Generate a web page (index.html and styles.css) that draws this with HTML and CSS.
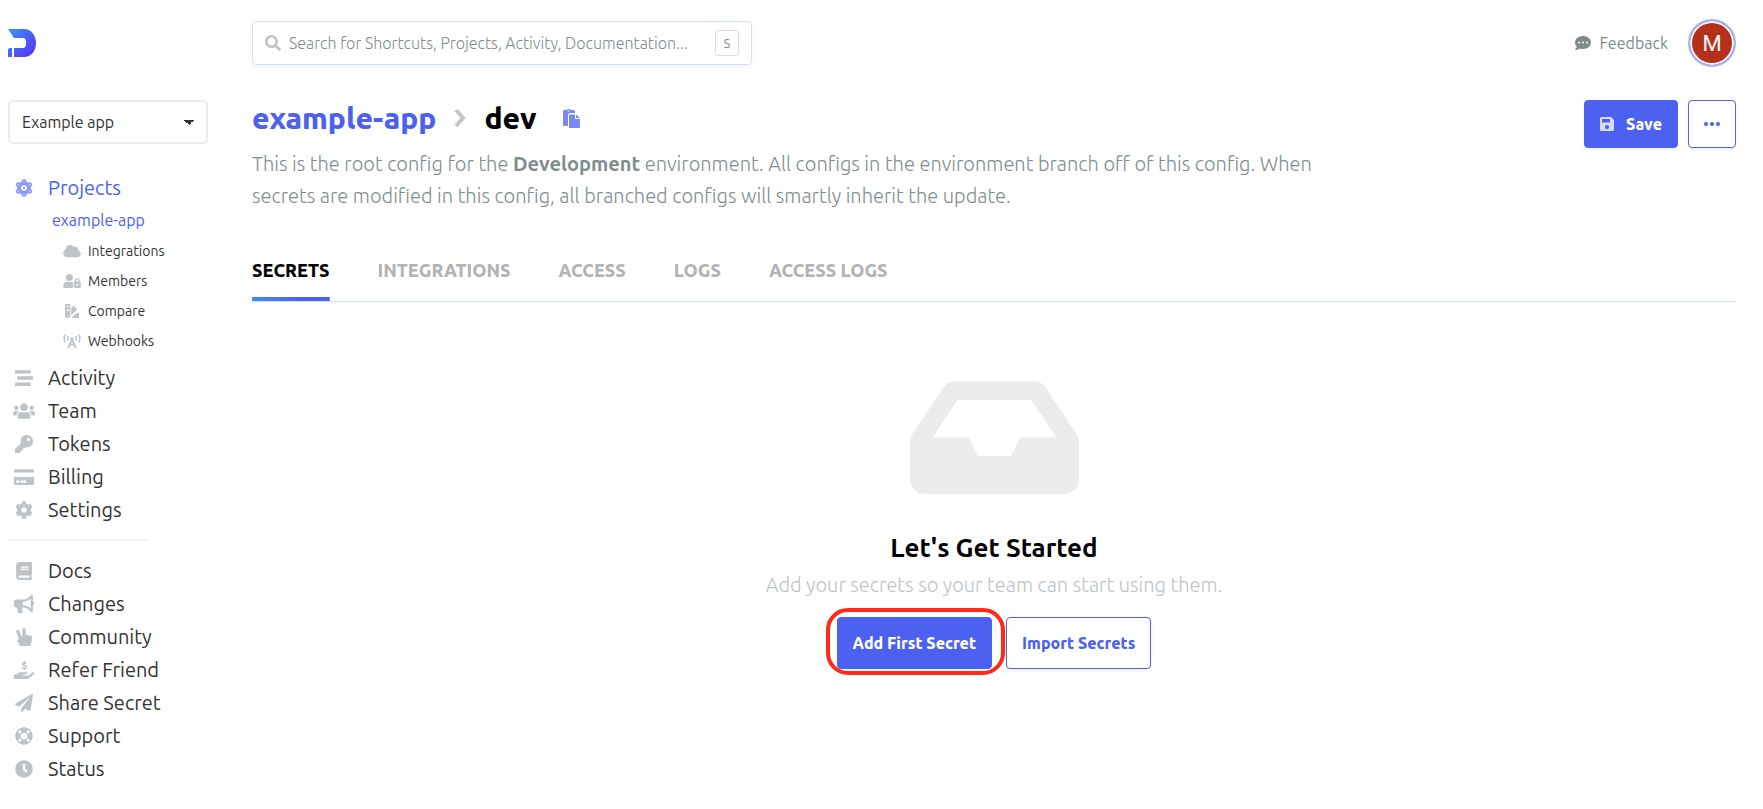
FILE: index.html
```
<!DOCTYPE html>
<html lang="en">
<head>
<meta charset="utf-8">
<title>example-app / dev</title>
<link rel="stylesheet" href="styles.css">
</head>
<body>
<div class="app">
  <aside class="sidebar">
    <a class="logo" href="#" aria-label="Home">
      <svg width="28" height="28" viewBox="0 0 28 28"><defs><linearGradient id="brand" x1="0" y1="0" x2="1" y2="1"><stop offset="0" stop-color="#3f96f0"/><stop offset=".45" stop-color="#4668f3"/><stop offset="1" stop-color="#5a2dff"/></linearGradient></defs><path fill="url(#brand)" d="M0 0H16C23 0 28 6 28 14S23 28 16 28H6V19H15C17 19 18 17.500 18 14S17 9 15 9H6zM0 21Q0 19 2 19H4V28H0z"/></svg>
    </a>
    <select class="project-select" aria-label="Project"><option>Example app</option></select>
    <nav class="nav">
      <a class="nav-item nav-item-active" href="#"><svg class="nav-icon" viewBox="0 0 18 18"><path fill-rule="evenodd" d="M9 1L16 5V13L9 17 2 13V5zM9 6.200a2.800 2.800 0 1 0 0 5.600 2.800 2.800 0 0 0 0-5.600z"/><g fill="#fff" stroke="currentColor" stroke-width="1.800"><circle cx="9" cy="2.400" r="1.500"/><circle cx="9" cy="15.600" r="1.500"/><circle cx="3.200" cy="5.700" r="1.500"/><circle cx="14.800" cy="5.700" r="1.500"/><circle cx="3.200" cy="12.300" r="1.500"/><circle cx="14.800" cy="12.300" r="1.500"/></g><circle cx="9" cy="9" r="1.200"/></svg>Projects</a>
      <a class="nav-project" href="#">example-app</a>
      <div class="subnav">
        <a class="subnav-item" href="#"><svg class="subnav-icon" viewBox="0 0 640 512"><path d="M537.6 226.6c4.100-10.700 6.400-22.400 6.400-34.600 0-53-43-96-96-96-19.700 0-38.100 6-53.300 16.200C367 64.200 315.300 32 256 32c-88.400 0-160 71.600-160 160 0 2.700.1 5.400.2 8.100C40.200 219.800 0 273.200 0 336c0 79.500 64.500 144 144 144h368c70.700 0 128-57.300 128-128 0-61.900-44-113.600-102.400-125.400z"/></svg>Integrations</a>
        <a class="subnav-item" href="#"><svg class="subnav-icon" viewBox="0 0 640 512"><path fill-rule="evenodd" d="M224 0a128 128 0 1 1 0 256A128 128 0 0 1 224 0zM134 288h180q22 0 42 8-4 12-4 24v160q0 18 10 32H48q-48 0-48-48v-42q0-134 134-134zM424 272v-40a88 88 0 0 1 176 0v40q40 0 40 40v160q0 40-40 40H424q-40 0-40-40V312q0-40 40-40zm48 0h80v-40a40 40 0 0 0-80 0zm40 80a40 40 0 1 0 0 80 40 40 0 0 0 0-80z"/></svg>Members</a>
        <a class="subnav-item" href="#"><svg class="subnav-icon" viewBox="0 0 512 512"><path fill-rule="evenodd" d="M0 32Q0 0 32 0h128q32 0 32 32v384a96 96 0 0 1-192 0zM64 64v64h64V64zm0 128v64h64v-64zm32 200a24 24 0 1 0 0 48 24 24 0 0 0 0-48zM224 150l67-67q22-22 44 0l92 92q22 22 0 44L224 422zM434 320h46q32 0 32 32v128q0 32-32 32H242z"/></svg>Compare</a>
        <a class="subnav-item" href="#"><svg class="subnav-icon" viewBox="0 0 640 512"><g fill="none" stroke="currentColor" stroke-width="56" stroke-linecap="round"><path d="M70 36q-72 124 0 248M570 36q72 124 0 248M176 100q-32 60 0 120M464 100q32 60 0 120"/><path stroke-width="64" d="M320 190L196 480M320 190l124 290M250 376h140"/></g><circle cx="320" cy="170" r="64"/></svg>Webhooks</a>
      </div>
      <a class="nav-item" href="#"><svg class="nav-icon" viewBox="0 0 512 512"><path d="M16 128h416c8.840 0 16-7.160 16-16V48c0-8.840-7.160-16-16-16H16C7.160 32 0 39.160 0 48v64c0 8.840 7.160 16 16 16zm480 80H80c-8.840 0-16 7.160-16 16v64c0 8.840 7.160 16 16 16h416c8.840 0 16-7.160 16-16v-64c0-8.840-7.160-16-16-16zm-64 176H16c-8.840 0-16 7.160-16 16v64c0 8.840 7.160 16 16 16h416c8.840 0 16-7.160 16-16v-64c0-8.840-7.160-16-16-16z"/></svg>Activity</a>
      <a class="nav-item" href="#"><svg class="nav-icon" viewBox="0 0 640 512"><path d="M96 224c35.300 0 64-28.700 64-64s-28.700-64-64-64-64 28.700-64 64 28.700 64 64 64zm448 0c35.300 0 64-28.700 64-64s-28.700-64-64-64-64 28.700-64 64 28.700 64 64 64zm32 32h-64c-17.600 0-33.500 7.100-45.100 18.600 40.300 22.100 68.900 62 75.100 109.400h66c17.700 0 32-14.300 32-32v-32c0-35.300-28.700-64-64-64zm-256 0c61.900 0 112-50.100 112-112S381.900 32 320 32 208 82.100 208 144s50.100 112 112 112zm76.800 32h-8.300c-20.800 10-43.900 16-68.500 16s-47.600-6-68.500-16h-8.300C179.600 288 128 339.600 128 403.200V432c0 26.500 21.500 48 48 48h288c26.500 0 48-21.500 48-48v-28.800c0-63.600-51.600-115.200-115.200-115.200zm-223.700-13.400C161.500 263.100 145.600 256 128 256H64c-35.300 0-64 28.700-64 64v32c0 17.700 14.300 32 32 32h65.900c6.300-47.400 34.900-87.300 75.200-109.400z"/></svg>Team</a>
      <a class="nav-item" href="#"><svg class="nav-icon" viewBox="0 0 512 512"><path d="M512 176.001C512 273.203 433.202 352 336 352c-11.220 0-22.190-1.062-32.827-3.069l-24.012 27.014A23.999 23.999 0 0 1 261.223 384H224v40c0 13.255-10.745 24-24 24h-40v40c0 13.255-10.745 24-24 24H24c-13.255 0-24-10.745-24-24v-78.059c0-6.365 2.529-12.470 7.029-16.971l161.802-161.802C163.108 213.814 160 195.271 160 176 160 78.798 238.797.001 335.999 0 433.488-.001 512 78.511 512 176.001zM336 128c0 26.510 21.490 48 48 48s48-21.490 48-48-21.490-48-48-48-48 21.490-48 48z"/></svg>Tokens</a>
      <a class="nav-item" href="#"><svg class="nav-icon" viewBox="0 0 576 512"><path d="M0 432c0 26.500 21.500 48 48 48h480c26.500 0 48-21.500 48-48V256H0v176zm192-68c0-6.600 5.400-12 12-12h136c6.600 0 12 5.400 12 12v40c0 6.600-5.400 12-12 12H204c-6.600 0-12-5.400-12-12v-40zm-128 0c0-6.600 5.400-12 12-12h72c6.600 0 12 5.400 12 12v40c0 6.600-5.400 12-12 12H76c-6.600 0-12-5.400-12-12v-40zM576 80v48H0V80c0-26.500 21.500-48 48-48h480c26.500 0 48 21.500 48 48z"/></svg>Billing</a>
      <a class="nav-item" href="#"><svg class="nav-icon" viewBox="0 0 512 512"><path d="M487.400 315.700l-42.600-24.600c4.300-23.200 4.300-47 0-70.200l42.600-24.600c4.900-2.800 7.100-8.600 5.500-14-11.100-35.600-30-67.800-54.700-94.600-3.800-4.100-10-5.100-14.800-2.300L380.800 110c-17.900-15.400-38.500-27.300-60.800-35.100V25.800c0-5.600-3.900-10.500-9.400-11.700-36.700-8.200-74.300-7.800-109.200 0-5.500 1.200-9.400 6.100-9.400 11.700V75c-22.200 7.900-42.800 19.800-60.800 35.100L88.700 85.500c-4.900-2.800-11-1.900-14.800 2.300-24.700 26.700-43.600 58.900-54.700 94.600-1.700 5.400.6 11.200 5.500 14L67.300 221c-4.300 23.200-4.300 47 0 70.200l-42.600 24.600c-4.900 2.800-7.100 8.600-5.500 14 11.100 35.600 30 67.800 54.700 94.600 3.800 4.100 10 5.100 14.800 2.300l42.600-24.600c17.900 15.400 38.500 27.300 60.800 35.100v49.200c0 5.600 3.900 10.500 9.400 11.700 36.700 8.200 74.300 7.800 109.200 0 5.500-1.200 9.400-6.100 9.400-11.700v-49.200c22.200-7.900 42.800-19.800 60.800-35.100l42.600 24.600c4.900 2.800 11 1.900 14.800-2.300 24.700-26.700 43.600-58.900 54.700-94.600 1.500-5.500-.7-11.300-5.600-14.100zM256 336c-44.100 0-80-35.900-80-80s35.900-80 80-80 80 35.900 80 80-35.900 80-80 80z"/></svg>Settings</a>
      <hr class="nav-rule">
      <a class="nav-item" href="#"><svg class="nav-icon" viewBox="0 0 448 512"><path d="M448 360V24c0-13.300-10.700-24-24-24H96C43 0 0 43 0 96v320c0 53 43 96 96 96h328c13.300 0 24-10.700 24-24v-16c0-7.500-3.500-14.300-8.900-18.700-4.200-15.400-4.200-59.300 0-74.700 5.400-4.300 8.900-11.100 8.900-18.600zM128 134c0-3.300 2.700-6 6-6h212c3.300 0 6 2.700 6 6v20c0 3.300-2.700 6-6 6H134c-3.300 0-6-2.700-6-6v-20zm0 64c0-3.300 2.700-6 6-6h212c3.300 0 6 2.700 6 6v20c0 3.300-2.700 6-6 6H134c-3.300 0-6-2.700-6-6v-20zm253.400 250H96c-17.700 0-32-14.300-32-32 0-17.600 14.400-32 32-32h285.400c-1.900 17.100-1.900 46.900 0 64z"/></svg>Docs</a>
      <a class="nav-item" href="#"><svg class="nav-icon" viewBox="0 0 576 512"><path d="M576 240c0-23.630-12.950-44.040-32-55.120V32.010C544 23.260 537.020 0 512 0c-7.120 0-14.190 2.380-19.980 7.020l-85.030 68.030C364.280 109.190 310.660 128 256 128H64c-35.350 0-64 28.650-64 64v96c0 35.350 28.650 64 64 64h33.700c-1.390 10.480-2.180 21.140-2.180 32 0 39.770 9.260 77.350 25.560 110.940 5.190 10.690 16.520 17.060 28.400 17.060h74.280c26.050 0 41.690-29.840 25.900-50.560-16.400-21.520-26.150-48.360-26.150-77.440 0-11.110 1.620-21.790 4.410-32H256c54.660 0 108.280 18.810 150.980 52.950l85.030 68.030a32.023 32.023 0 0 0 19.980 7.020c24.920 0 32-22.780 32-32V295.130C563.050 284.040 576 263.630 576 240zm-96 141.420l-33.050-26.440C392.950 311.780 325.120 288 256 288v-96c69.120 0 136.950-23.780 190.950-66.980L480 98.580v282.840z"/></svg>Changes</a>
      <a class="nav-item" href="#"><svg class="nav-icon" viewBox="0 0 448 512"><path d="M408 216c-22.092 0-40 17.909-40 40h-8v-32c0-22.091-17.908-40-40-40s-40 17.909-40 40v32h-8V48c0-26.510-21.490-48-48-48s-48 21.490-48 48v208h-13.572L92.688 78.449C82.994 53.774 55.134 41.630 30.461 51.324 5.787 61.017-6.356 88.877 3.337 113.551l74.765 190.342-31.090 24.872c-15.381 12.306-19.515 33.978-9.741 51.081l64 112A39.998 39.998 0 0 0 136 512h240c18.562 0 34.686-12.770 38.937-30.838l32-136A39.973 39.973 0 0 0 448 336v-80c0-22.091-17.908-40-40-40z"/></svg>Community</a>
      <a class="nav-item" href="#"><svg class="nav-icon" viewBox="0 0 576 512"><path d="M565.300 328.100c-11.800-10.700-30.200-10-42.600 0L430.300 402c-11.300 9.100-25.400 14-40 14H272c-8.800 0-16-7.200-16-16s7.200-16 16-16h78.300c15.900 0 30.700-10.900 33.300-26.600 3.300-20-12.100-37.400-31.600-37.400H192c-27 0-53.100 9.300-74.100 26.300L71.400 384H16c-8.800 0-16 7.200-16 16v96c0 8.800 7.200 16 16 16h356.800c14.500 0 28.600-4.900 40-14L564 377c15.200-12.100 16.400-35.300 1.300-48.900z"/><path fill="none" stroke="currentColor" stroke-width="44" d="M358 78q-24-20-60-20-48 0-48 34c0 52 102 22 102 76q0 36-50 36-38 0-66-22M302 0v58M302 200v56"/></svg>Refer Friend</a>
      <a class="nav-item" href="#"><svg class="nav-icon" viewBox="0 0 512 512"><path d="M476 3.200L12.500 270.600c-18.100 10.400-15.800 35.600 2.200 43.200L121 358.400l287.300-253.200c5.500-4.900 13.300 2.600 8.600 8.300L176 407v80.500c0 23.600 28.500 32.900 42.500 15.800L282 426l124.600 52.200c14.200 6 30.400-2.900 33-18.200l72-432C515 7.800 493.300-6.800 476 3.200z"/></svg>Share Secret</a>
      <a class="nav-item" href="#"><svg class="nav-icon" viewBox="0 0 512 512"><path d="M256 8C119.033 8 8 119.033 8 256s111.033 248 248 248 248-111.033 248-248S392.967 8 256 8zm173.696 119.559l-63.399 63.399c-10.987-18.559-26.670-34.252-45.255-45.255l63.399-63.399a218.396 218.396 0 0 1 45.255 45.255zM256 352c-53.019 0-96-42.981-96-96s42.981-96 96-96 96 42.981 96 96-42.981 96-96 96zM127.559 82.304l63.399 63.399c-18.559 10.987-34.252 26.670-45.255 45.255l-63.399-63.399a218.372 218.372 0 0 1 45.255-45.255zM82.304 384.441l63.399-63.399c10.987 18.559 26.670 34.252 45.255 45.255l-63.399 63.399a218.396 218.396 0 0 1-45.255-45.255zm302.137 45.255l-63.399-63.399c18.559-10.987 34.252-26.670 45.255-45.255l63.399 63.399a218.403 218.403 0 0 1-45.255 45.255z"/></svg>Support</a>
      <a class="nav-item" href="#"><svg class="nav-icon" viewBox="0 0 512 512"><path d="M256 8C119 8 8 119 8 256s111 248 248 248 248-111 248-248S393 8 256 8zm92.490 313l-20 25a16 16 0 0 1-22.490 2.500l-67-49.720a40 40 0 0 1-15-31.230V112a16 16 0 0 1 16-16h32a16 16 0 0 1 16 16v144l58 42.500a16 16 0 0 1 2.490 22.500z"/></svg>Status</a>
    </nav>
  </aside>

  <div class="page">
    <header class="topbar">
      <label class="search">
        <svg class="search-icon" viewBox="0 0 512 512"><path d="M505 442.700L405.300 343c-4.500-4.500-10.600-7-17-7H372c27.600-35.300 44-79.700 44-128C416 93.100 322.900 0 208 0S0 93.100 0 208s93.100 208 208 208c48.300 0 92.700-16.400 128-44v16.300c0 6.400 2.500 12.500 7 17l99.700 99.700c9.400 9.400 24.600 9.400 33.900 0l28.300-28.300c9.400-9.400 9.400-24.600.1-34zM208 336c-70.700 0-128-57.200-128-128 0-70.700 57.200-128 128-128 70.700 0 128 57.200 128 128 0 70.700-57.200 128-128 128z"/></svg>
        <input class="search-input" type="text" aria-label="Search" placeholder="Search for Shortcuts, Projects, Activity, Documentation...">
        <kbd class="search-key">S</kbd>
      </label>
      <div class="account">
        <a class="feedback" href="#"><svg class="feedback-icon" viewBox="0 0 512 512"><path d="M256 32C114.600 32 0 125.100 0 240c0 49.600 21.400 95 57 130.700C44.500 421.100 2.700 466 2.200 466.500c-2.200 2.300-2.800 5.700-1.500 8.700S4.800 480 8 480c66.300 0 116-31.800 140.600-51.400 32.700 12.300 69 19.400 107.400 19.400 141.400 0 256-93.100 256-208S397.400 32 256 32z"/><g fill="#fff"><circle cx="128" cy="240" r="32"/><circle cx="256" cy="240" r="32"/><circle cx="384" cy="240" r="32"/></g></svg>Feedback</a>
        <button class="avatar" type="button" aria-label="Account">M</button>
      </div>
    </header>

    <main class="main">
      <div class="heading">
        <div class="heading-text">
          <h1 class="title">
            <a class="title-link" href="#">example-app</a>
            <svg class="title-chevron" viewBox="0 0 12 18"><path fill="none" stroke="#c3c6ca" stroke-width="4" d="M2 1l7 8-7 8"/></svg>
            <span>dev</span>
            <button class="copy" type="button" aria-label="Copy name"><svg width="17" height="19" viewBox="0 0 17 19"><path d="M0 3Q0 1 1 1H3.500Q4 0 5.500 0T8 1h2.500Q12 1 12 3v1H7Q5 4 5 6v11H1Q0 17 0 16zM5.500 1.200a.8.8 0 1 0 0 1.600.8.800 0 0 0 0-1.600zM6 6.500Q6 5.500 7 5.500h5V10h5v8q0 1-1 1H7Q6 19 6 18zM13 5.500L17 9h-4z"/></svg></button>
          </h1>
          <p class="description">This is the root config for the <strong>Development</strong> environment. All configs in the environment branch off of this config. When secrets are modified in this config, all branched configs will smartly inherit the update.</p>
        </div>
        <div class="actions">
          <button class="button button-primary button-save" type="button"><svg width="14" height="14" viewBox="0 0 14 14"><path fill="#d9dcfc" fill-rule="evenodd" d="M0 1.500Q0 0 1.500 0H11l3 3v9.500q0 1.500-1.500 1.500h-11Q0 14 0 12.500zM2 2v3.500h8V2zM7 8a2.100 2.100 0 1 0 0 4.200A2.100 2.100 0 0 0 7 8z"/></svg>Save</button>
          <button class="button button-outline button-more" type="button" aria-label="More"><svg width="16" height="4" viewBox="0 0 16 4"><circle cx="2" cy="2" r="2"/><circle cx="8" cy="2" r="2"/><circle cx="14" cy="2" r="2"/></svg></button>
        </div>
      </div>

      <nav class="tabs">
        <a class="tab tab-active" href="#">SECRETS</a>
        <a class="tab" href="#">INTEGRATIONS</a>
        <a class="tab" href="#">ACCESS</a>
        <a class="tab" href="#">LOGS</a>
        <a class="tab" href="#">ACCESS LOGS</a>
      </nav>

      <section class="empty">
        <svg class="empty-icon" viewBox="0 64 576 384"><path d="M567.938 243.908L462.250 85.374A48.003 48.003 0 0 0 422.311 64H153.689a48 48 0 0 0-39.938 21.374L8.062 243.908A47.994 47.994 0 0 0 0 270.533V400c0 26.510 21.490 48 48 48h480c26.510 0 48-21.490 48-48V270.533a47.994 47.994 0 0 0-8.062-26.625zM162.252 128h251.497l85.333 128H376l-32 64H232l-32-64H76.918l85.334-128z"/></svg>
        <h2 class="empty-title">Let's Get Started</h2>
        <p class="empty-text">Add your secrets so your team can start using them.</p>
        <div class="empty-actions">
          <button class="button button-primary button-tall highlighted" type="button">Add First Secret</button>
          <button class="button button-outline button-tall" type="button">Import Secrets</button>
        </div>
      </section>
    </main>
  </div>
</div>
</body>
</html>
```
FILE: styles.css
```
* { box-sizing: border-box; }

body {
  margin: 0;
  background: #fff;
  color: #333;
  font-family: Ubuntu, "Open Sans", "Noto Sans", sans-serif;
  font-size: 20px;
}

a { color: inherit; text-decoration: none; }
button, input, select { font-family: inherit; }
button { cursor: pointer; }
svg { flex: none; fill: currentColor; }

.app { display: grid; grid-template-columns: 200px minmax(0, 1fr); column-gap: 44px; padding: 0 27px 0 8px; }

.sidebar { padding-top: 29px; }
.logo { display: block; height: 71px; }
.logo svg { display: block; }

.project-select {
  display: block;
  width: 100%;
  height: 44px;
  padding: 0 12px;
  border: 2px solid #ececec;
  border-radius: 5px;
  appearance: none;
  background: linear-gradient(to bottom left, #333 50%, transparent 50%) right 17px center / 5px 5px no-repeat, linear-gradient(to bottom right, #333 50%, transparent 50%) right 12px center / 5px 5px no-repeat, #fff;
  color: #333;
  font-size: 16px;
}

.nav { padding-top: 27px; }
.nav-item { display: grid; grid-template-columns: 32px 1fr; column-gap: 8px; align-items: center; height: 33px; }
.nav-icon { justify-self: center; width: 22px; height: 18px; color: #bdc3c7; }
.nav-item-active { color: #4c61f0; }
.nav-item-active .nav-icon { color: #8f9df6; }
.nav-project { display: block; padding-left: 44px; color: #4c61f0; font-size: 16px; line-height: 32px; }
.subnav { padding-bottom: 5px; }
.subnav-item { display: grid; grid-template-columns: 18px 1fr; column-gap: 7px; align-items: center; height: 30px; padding-left: 55px; font-size: 14px; }
.subnav-icon { width: 18px; height: 14px; color: #bdc3c7; }
.nav-rule { width: 140px; height: 2px; margin: 13px 0; border: 0; background: #f3f3f3; }

.topbar { display: flex; justify-content: space-between; align-items: center; padding-top: 19px; }
.search {
  display: flex;
  align-items: center;
  gap: 8px;
  width: 500px;
  height: 44px;
  padding: 0 12px;
  border: 1px solid #d3dff2;
  border-radius: 4px;
  box-shadow: 0 3px 6px rgba(0, 0, 0, .04);
}
.search-icon { width: 16px; height: 16px; color: #bfc3c7; }
.search-input { flex: 1; min-width: 0; padding: 0; border: 0; outline: 0; background: none; color: #333; font-size: 16px; font-weight: 300; }
.search-input::placeholder { color: #7f8c8d; opacity: 1; }
.search-key { display: grid; place-items: center; width: 24px; height: 26px; border: 1px solid #d3dff2; border-radius: 3px; color: #7f8c8d; font-family: inherit; font-size: 13px; }

.account { display: flex; align-items: center; gap: 20px; }
.feedback { display: flex; align-items: center; gap: 8px; color: #7f8c8d; font-size: 16px; }
.feedback-icon { width: 16px; height: 16px; }
.avatar { width: 48px; height: 48px; padding: 0; border: 2px solid #a9b4f8; border-radius: 50%; background: #b5301a; box-shadow: inset 0 0 0 2px #fff; color: #fff; font-family: Roboto, sans-serif; font-size: 22px; }

.main { padding-top: 33px; }
.heading { display: flex; justify-content: space-between; align-items: flex-start; }
.heading-text { max-width: 1080px; }
.title { display: flex; align-items: center; height: 36px; margin: 0; color: #000; font-size: 30px; font-weight: 800; line-height: 36px; }
.title-link { color: #4c61f0; }
.title-chevron { width: 12px; height: 18px; margin: 0 18px; }
.copy { display: flex; margin-left: 26px; padding: 0; border: 0; background: none; color: #7888f4; }
.description { margin: 12px 0 0; color: #7f8c8d; font-size: 20px; font-weight: 300; line-height: 32px; }
.description strong { font-weight: 600; }

.actions { display: flex; gap: 10px; }
.button { display: flex; justify-content: center; align-items: center; height: 48px; padding: 0 15px; border: 1px solid #4c61f0; border-radius: 4px; box-shadow: 0 2px 3px rgba(0, 0, 0, .06); font-size: 16px; font-weight: 800; }
.button-primary { background: #4c61f0; color: #fff; }
.button-outline { background: #fff; color: #4c61f0; }
.button-save { gap: 12px; }
.button-more { width: 48px; padding: 0; }
.button-tall { height: 52px; }

.tabs { display: flex; gap: 48px; margin-top: 40px; border-bottom: 1px solid #d3dff2; }
.tab { height: 49px; color: #b3b3b3; font-size: 18px; font-weight: 800; line-height: 36px; }
.tab-active { background: linear-gradient(to right, #3f8ff0, #4c61f0 60%) bottom / 100% 4px no-repeat; color: #000; }

.empty { display: flex; flex-direction: column; align-items: center; padding-top: 79px; }
.empty-icon { width: 169px; height: 113px; color: #ececec; }
.empty-title { margin: 36px 0 0; color: #000; font-size: 26px; font-weight: 600; line-height: 36px; }
.empty-text { margin: 3px 0 0; color: #bdc3c7; font-size: 20px; font-weight: 300; line-height: 32px; }
.empty-actions { display: flex; gap: 14px; margin-top: 16px; }
.highlighted { position: relative; }
.highlighted::after { content: ""; position: absolute; inset: -10px -14px -7px -12px; border: 4px solid #ff2a17; border-radius: 22px; }
```
